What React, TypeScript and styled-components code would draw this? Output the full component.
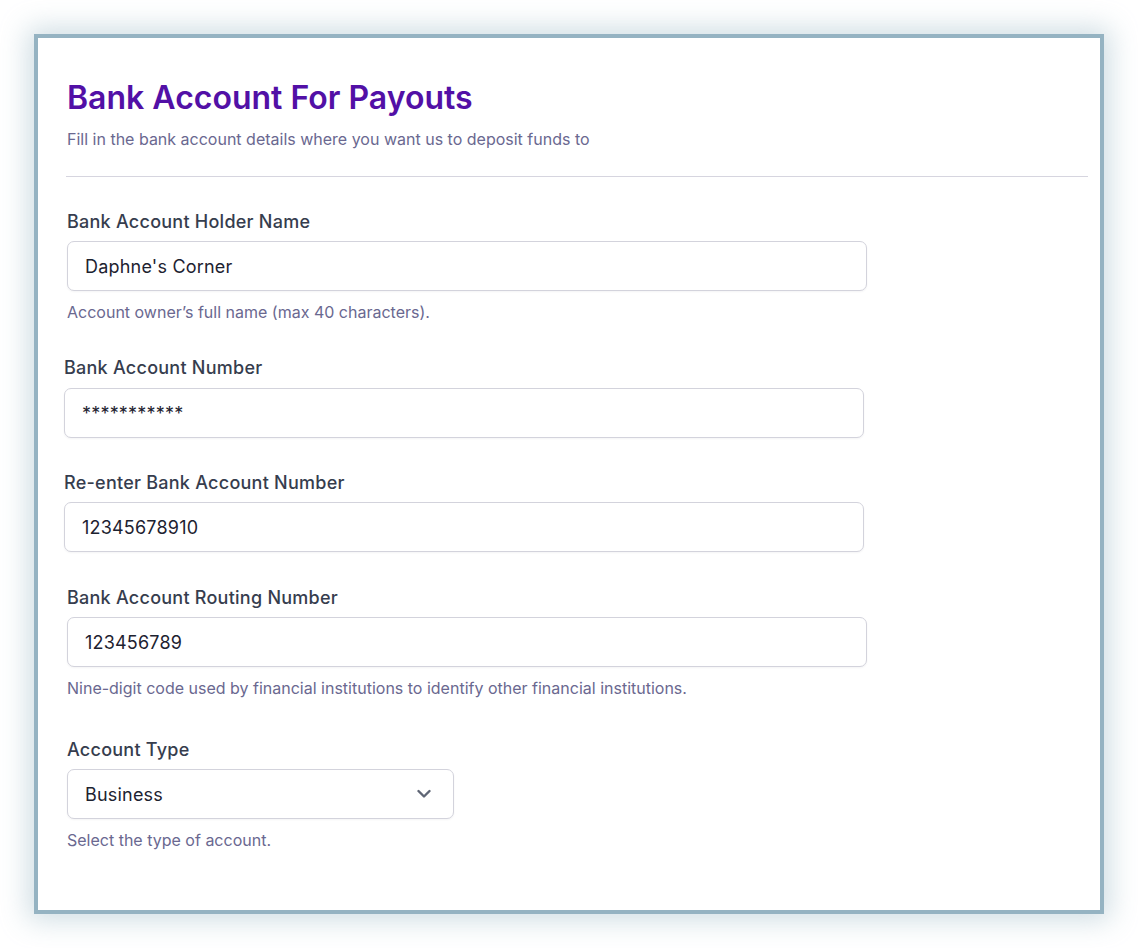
import React from "react";
import styled, { createGlobalStyle } from "styled-components";

const Global = createGlobalStyle`
  html, body { margin: 0; padding: 0; background: #ffffff; }
  body { font-family: Inter, "Noto Sans", sans-serif; -webkit-font-smoothing: antialiased; }
  * { box-sizing: border-box; }
`;

const Page = styled.div`
  width: 1138px;
  height: 948px;
  padding: 34px 34px 0 34px;
  background: #ffffff;
`;

const Frame = styled.section`
  width: 1070px;
  height: 880px;
  border: 4px solid #95b3c2;
  background: #ffffff;
  box-shadow: 0 0 26px 6px rgba(149, 179, 194, 0.45);
  padding: 40px 12px 0 29px;
  display: flex;
  flex-direction: column;
`;

const Title = styled.h1`
  margin: 0;
  font-size: 32px;
  line-height: 40px;
  font-weight: 600;
  color: #5210a6;
`;

const Subtitle = styled.p`
  margin: 10px 0 0 0;
  font-size: 16px;
  line-height: 22px;
  color: #6a6890;
`;

const Divider = styled.hr`
  margin: 26px 0 0 -1px;
  border: 0;
  height: 1px;
  background: #d6d5df;
`;

const Field = styled.div<{ $top: number; $shift?: number }>`
  display: flex;
  flex-direction: column;
  margin-top: ${(p) => p.$top}px;
  margin-left: ${(p) => p.$shift ?? 0}px;
`;

const Label = styled.label<{ $gap?: number }>`
  font-size: 18px;
  line-height: 24px;
  font-weight: 500;
  letter-spacing: 0.25px;
  color: #363d4e;
  margin-bottom: ${(p) => p.$gap ?? 7}px;
`;

const InputBox = styled.div<{ $width: number }>`
  width: ${(p) => p.$width}px;
  height: 50px;
  border: 1px solid #d3d3dc;
  border-radius: 7px;
  background: #ffffff;
  box-shadow: 0 1px 2px rgba(30, 30, 60, 0.05);
  display: flex;
  align-items: center;
  justify-content: space-between;
  padding: 0 22px 0 17px;
  font-size: 18px;
  letter-spacing: 0.2px;
  color: #1d2230;
`;

const Hint = styled.p`
  margin: 10px 0 0 0;
  font-size: 16px;
  line-height: 22px;
  color: #6a6890;
`;

const Chevron = () => (
  <svg width="14" height="14" viewBox="0 0 14 14" fill="none">
    <path d="M1.5 4 L7 9.5 L12.5 4" stroke="#5f6675" strokeWidth="2.4" strokeLinecap="round" strokeLinejoin="round" />
  </svg>
);

export default function App() {
  return (
    <Page>
      <Global />
      <Frame>
        <Title>Bank Account For Payouts</Title>
        <Subtitle>Fill in the bank account details where you want us to deposit funds to</Subtitle>
        <Divider />

        <Field $top={33}>
          <Label>Bank Account Holder Name</Label>
          <InputBox $width={800}>Daphne's Corner</InputBox>
          <Hint>Account owner’s full name (max 40 characters).</Hint>
        </Field>

        <Field $top={33} $shift={-3}>
          <Label $gap={8}>Bank Account Number</Label>
          <InputBox $width={800}>***********</InputBox>
        </Field>

        <Field $top={33} $shift={-3}>
          <Label>Re-enter Bank Account Number</Label>
          <InputBox $width={800}>12345678910</InputBox>
        </Field>

        <Field $top={34}>
          <Label>Bank Account Routing Number</Label>
          <InputBox $width={800}>123456789</InputBox>
          <Hint>Nine-digit code used by financial institutions to identify other financial institutions.</Hint>
        </Field>

        <Field $top={39}>
          <Label>Account Type</Label>
          <InputBox $width={387}>
            <span>Business</span>
            <Chevron />
          </InputBox>
          <Hint>Select the type of account.</Hint>
        </Field>
      </Frame>
    </Page>
  );
}
